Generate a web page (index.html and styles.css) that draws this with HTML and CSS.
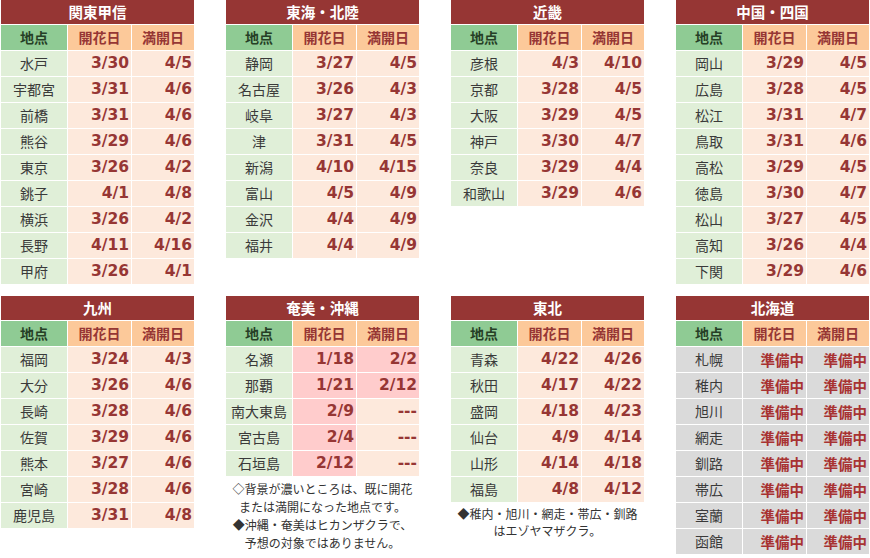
FILE: index.html
```html
<!DOCTYPE html>
<html lang="ja">
<head>
<meta charset="utf-8">
<title>桜の開花予想</title>
<link rel="stylesheet" href="styles.css">
</head>
<body>
<div class="page">
  <div class="band">
    <section class="region">
      <h2 class="title">関東甲信</h2>
      <div class="grid">
        <div class="hd hd-place">地点</div><div class="hd hd-date">開花日</div><div class="hd hd-date">満開日</div>
        <div class="pl">水戸</div><div class="dt">3/30</div><div class="dt">4/5</div>
        <div class="pl">宇都宮</div><div class="dt">3/31</div><div class="dt">4/6</div>
        <div class="pl">前橋</div><div class="dt">3/31</div><div class="dt">4/6</div>
        <div class="pl">熊谷</div><div class="dt">3/29</div><div class="dt">4/6</div>
        <div class="pl">東京</div><div class="dt">3/26</div><div class="dt">4/2</div>
        <div class="pl">銚子</div><div class="dt">4/1</div><div class="dt">4/8</div>
        <div class="pl">横浜</div><div class="dt">3/26</div><div class="dt">4/2</div>
        <div class="pl">長野</div><div class="dt">4/11</div><div class="dt">4/16</div>
        <div class="pl">甲府</div><div class="dt">3/26</div><div class="dt">4/1</div>
      </div>
    </section>
    <section class="region">
      <h2 class="title">東海・北陸</h2>
      <div class="grid">
        <div class="hd hd-place">地点</div><div class="hd hd-date">開花日</div><div class="hd hd-date">満開日</div>
        <div class="pl">静岡</div><div class="dt">3/27</div><div class="dt">4/5</div>
        <div class="pl">名古屋</div><div class="dt">3/26</div><div class="dt">4/3</div>
        <div class="pl">岐阜</div><div class="dt">3/27</div><div class="dt">4/3</div>
        <div class="pl">津</div><div class="dt">3/31</div><div class="dt">4/5</div>
        <div class="pl">新潟</div><div class="dt">4/10</div><div class="dt">4/15</div>
        <div class="pl">富山</div><div class="dt">4/5</div><div class="dt">4/9</div>
        <div class="pl">金沢</div><div class="dt">4/4</div><div class="dt">4/9</div>
        <div class="pl">福井</div><div class="dt">4/4</div><div class="dt">4/9</div>
      </div>
    </section>
    <section class="region">
      <h2 class="title">近畿</h2>
      <div class="grid">
        <div class="hd hd-place">地点</div><div class="hd hd-date">開花日</div><div class="hd hd-date">満開日</div>
        <div class="pl">彦根</div><div class="dt">4/3</div><div class="dt">4/10</div>
        <div class="pl">京都</div><div class="dt">3/28</div><div class="dt">4/5</div>
        <div class="pl">大阪</div><div class="dt">3/29</div><div class="dt">4/5</div>
        <div class="pl">神戸</div><div class="dt">3/30</div><div class="dt">4/7</div>
        <div class="pl">奈良</div><div class="dt">3/29</div><div class="dt">4/4</div>
        <div class="pl">和歌山</div><div class="dt">3/29</div><div class="dt">4/6</div>
      </div>
    </section>
    <section class="region">
      <h2 class="title">中国・四国</h2>
      <div class="grid">
        <div class="hd hd-place">地点</div><div class="hd hd-date">開花日</div><div class="hd hd-date">満開日</div>
        <div class="pl">岡山</div><div class="dt">3/29</div><div class="dt">4/5</div>
        <div class="pl">広島</div><div class="dt">3/28</div><div class="dt">4/5</div>
        <div class="pl">松江</div><div class="dt">3/31</div><div class="dt">4/7</div>
        <div class="pl">鳥取</div><div class="dt">3/31</div><div class="dt">4/6</div>
        <div class="pl">高松</div><div class="dt">3/29</div><div class="dt">4/5</div>
        <div class="pl">徳島</div><div class="dt">3/30</div><div class="dt">4/7</div>
        <div class="pl">松山</div><div class="dt">3/27</div><div class="dt">4/5</div>
        <div class="pl">高知</div><div class="dt">3/26</div><div class="dt">4/4</div>
        <div class="pl">下関</div><div class="dt">3/29</div><div class="dt">4/6</div>
      </div>
    </section>
  </div>

  <div class="band">
    <section class="region">
      <h2 class="title">九州</h2>
      <div class="grid">
        <div class="hd hd-place">地点</div><div class="hd hd-date">開花日</div><div class="hd hd-date">満開日</div>
        <div class="pl">福岡</div><div class="dt">3/24</div><div class="dt">4/3</div>
        <div class="pl">大分</div><div class="dt">3/26</div><div class="dt">4/6</div>
        <div class="pl">長崎</div><div class="dt">3/28</div><div class="dt">4/6</div>
        <div class="pl">佐賀</div><div class="dt">3/29</div><div class="dt">4/6</div>
        <div class="pl">熊本</div><div class="dt">3/27</div><div class="dt">4/6</div>
        <div class="pl">宮崎</div><div class="dt">3/28</div><div class="dt">4/6</div>
        <div class="pl">鹿児島</div><div class="dt">3/31</div><div class="dt">4/8</div>
      </div>
    </section>
    <section class="region">
      <h2 class="title">奄美・沖縄</h2>
      <div class="grid">
        <div class="hd hd-place">地点</div><div class="hd hd-date">開花日</div><div class="hd hd-date">満開日</div>
        <div class="pl">名瀬</div><div class="dt done">1/18</div><div class="dt done">2/2</div>
        <div class="pl">那覇</div><div class="dt done">1/21</div><div class="dt done">2/12</div>
        <div class="pl">南大東島</div><div class="dt done">2/9</div><div class="dt">---</div>
        <div class="pl">宮古島</div><div class="dt done">2/4</div><div class="dt">---</div>
        <div class="pl">石垣島</div><div class="dt done">2/12</div><div class="dt">---</div>
      </div>
      <p class="note note-amami">◇背景が濃いところは、既に開花<br>または満開になった地点です。<br>◆沖縄・奄美はヒカンザクラで、<br>予想の対象ではありません。</p>
    </section>
    <section class="region">
      <h2 class="title">東北</h2>
      <div class="grid">
        <div class="hd hd-place">地点</div><div class="hd hd-date">開花日</div><div class="hd hd-date">満開日</div>
        <div class="pl">青森</div><div class="dt">4/22</div><div class="dt">4/26</div>
        <div class="pl">秋田</div><div class="dt">4/17</div><div class="dt">4/22</div>
        <div class="pl">盛岡</div><div class="dt">4/18</div><div class="dt">4/23</div>
        <div class="pl">仙台</div><div class="dt">4/9</div><div class="dt">4/14</div>
        <div class="pl">山形</div><div class="dt">4/14</div><div class="dt">4/18</div>
        <div class="pl">福島</div><div class="dt">4/8</div><div class="dt">4/12</div>
      </div>
      <p class="note note-tohoku">◆稚内・旭川・網走・帯広・釧路<br>はエゾヤマザクラ。</p>
    </section>
    <section class="region prep">
      <h2 class="title">北海道</h2>
      <div class="grid">
        <div class="hd hd-place">地点</div><div class="hd hd-date">開花日</div><div class="hd hd-date">満開日</div>
        <div class="pl">札幌</div><div class="dt">準備中</div><div class="dt">準備中</div>
        <div class="pl">稚内</div><div class="dt">準備中</div><div class="dt">準備中</div>
        <div class="pl">旭川</div><div class="dt">準備中</div><div class="dt">準備中</div>
        <div class="pl">網走</div><div class="dt">準備中</div><div class="dt">準備中</div>
        <div class="pl">釧路</div><div class="dt">準備中</div><div class="dt">準備中</div>
        <div class="pl">帯広</div><div class="dt">準備中</div><div class="dt">準備中</div>
        <div class="pl">室蘭</div><div class="dt">準備中</div><div class="dt">準備中</div>
        <div class="pl">函館</div><div class="dt">準備中</div><div class="dt">準備中</div>
      </div>
    </section>
  </div>
</div>
</body>
</html>
```

FILE: styles.css
```css
html, body {
  margin: 0;
  padding: 0;
  background: #ffffff;
}

body {
  font-family: "Noto Sans CJK JP", "Noto Sans", sans-serif;
  color: #3a3a3a;
}

.page {
  padding-left: 1px;
  display: flex;
  flex-direction: column;
  gap: 12px;
}

.band {
  display: flex;
  gap: 32px;
  align-items: flex-start;
}

.region {
  width: 193px;
  flex: none;
}

.title {
  margin: 0;
  height: 24px;
  line-height: 24px;
  background: #963634;
  color: #ffffff;
  font-size: 14.5px;
  font-weight: 700;
  text-align: center;
}

.grid {
  margin-top: 1px;
  display: grid;
  grid-template-columns: 66px 63px 62px;
  grid-auto-rows: 25px;
  gap: 1px;
}

.hd {
  font-size: 14px;
  font-weight: 700;
  line-height: 25px;
  text-align: center;
}

.hd-place {
  background: #8fcb94;
  color: #263f26;
}

.hd-date {
  background: #fcc99a;
  color: #963634;
}

.pl {
  background: #e0efd8;
  font-size: 14px;
  line-height: 25px;
  text-align: center;
  color: #3a3a3a;
  white-space: nowrap;
}

.dt {
  background: #fde9dc;
  color: #963634;
  font-family: "DejaVu Sans", Verdana, sans-serif;
  font-size: 15.5px;
  font-weight: 700;
  line-height: 25px;
  text-align: right;
  padding-right: 2px;
}

.dt.done {
  background: #ffcccc;
}

.prep .pl,
.prep .dt {
  background: #dadada;
}

.prep .dt {
  font-family: "Noto Sans CJK JP", sans-serif;
  font-size: 14.5px;
  color: #a83232;
}

.note {
  margin: 0;
  font-size: 12px;
  color: #333333;
  text-align: center;
  white-space: nowrap;
}

.note-amami {
  padding-top: 4px;
  line-height: 18px;
}

.note-tohoku {
  padding-top: 3px;
  line-height: 17px;
}
```
